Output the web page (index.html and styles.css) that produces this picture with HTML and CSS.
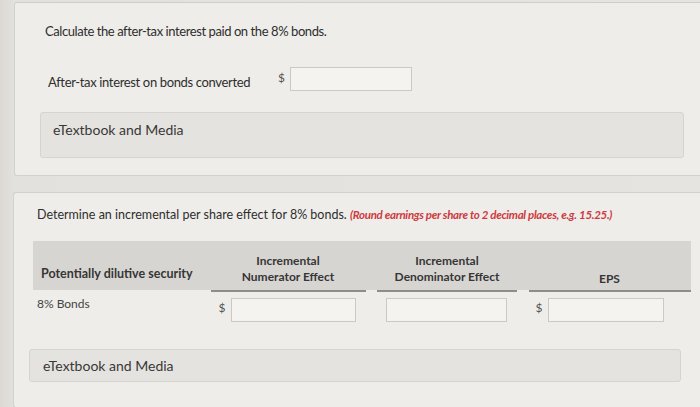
FILE: index.html
```html
<!DOCTYPE html>
<html>
<head>
<meta charset="utf-8">
<link rel="stylesheet" href="styles.css">
</head>
<body>
<div class="page">
  <section class="card card-one">
    <p class="title">Calculate the after-tax interest paid on the 8% bonds.</p>
    <div class="field-row">
      <span class="field-label">After-tax interest on bonds converted</span>
      <span class="dollar">$</span>
      <span class="input input-wide"></span>
    </div>
    <div class="media">eTextbook and Media</div>
  </section>

  <section class="card card-two">
    <p class="title title-two">Determine an incremental per share effect for 8% bonds. <em class="note">(Round earnings per share to 2 decimal places, e.g. 15.25.)</em></p>
    <div class="table">
      <div class="thead">
        <div class="th th-first">Potentially dilutive security</div>
        <div class="th th-col">Incremental<br>Numerator Effect</div>
        <div class="th th-col">Incremental<br>Denominator Effect</div>
        <div class="th th-col th-eps">EPS</div>
      </div>
      <div class="trow">
        <div class="td td-first">8% Bonds</div>
        <div class="td td-num"><span class="dollar">$</span><span class="input input-num"></span></div>
        <div class="td td-den"><span class="input input-den"></span></div>
        <div class="td td-eps"><span class="dollar">$</span><span class="input input-eps"></span></div>
      </div>
    </div>
    <div class="media media-two">eTextbook and Media</div>
  </section>
</div>
</body>
</html>
```

FILE: styles.css
```css
* { box-sizing: border-box; }
html, body {
  margin: 0;
  padding: 0;
  height: 100%;
  overflow: hidden;
}
body {
  background: linear-gradient(90deg, #dcd9d5 0px, #e3e1dd 14px, #e6e4e0 100%);
  font-family: Lato, "Open Sans", "Liberation Sans", sans-serif;
  color: #2e2e2e;
}
.page {
  padding: 2px 0 0 14px;
  display: flex;
  flex-direction: column;
  gap: 16px;
}
.card {
  background: #efede9;
  border: 1px solid #d3d1cd;
  border-right: none;
  border-radius: 3px 0 0 3px;
}
.card-one {
  padding: 20px 0 17px 25px;
  border-top-color: #cfcdc9;
}
.title {
  margin: 0;
  padding-left: 5px;
  font-size: 13px;
  letter-spacing: -0.42px;
  line-height: 16px;
  color: #2e2e2e;
}
.field-row {
  margin-top: 27px;
  display: flex;
  align-items: center;
  height: 26px;
  padding-left: 8px;
}
.field-label {
  width: 230px;
  font-size: 13px;
  letter-spacing: -0.35px;
  padding-top: 6px;
  color: #2e2e2e;
}
.dollar {
  font-size: 12px;
  color: #555;
  width: 12px;
  margin-top: -4px;
}
.input {
  display: block;
  height: 24px;
  background: #f4f3ef;
  border: 1px solid #cbc9c5;
}
.input-wide { width: 122px; }
.media {
  margin-top: 20px;
  width: 644px;
  height: 46px;
  background: #e5e3df;
  border: 1px solid #d6d4d0;
  border-radius: 3px;
  font-size: 14px;
  color: #383838;
  padding: 8px 0 0 12px;
}
.card-two {
  margin-left: -1px;
  padding: 14px 0 25px 19px;
  flex: 1;
}
.title-two {
  padding-left: 4px;
  font-size: 12.5px;
  letter-spacing: 0;
}
.note {
  color: #cc3a40;
  font-weight: 700;
  font-style: italic;
  font-size: 11.5px;
  letter-spacing: -0.3px;
}
.table {
  margin-top: 18px;
  width: 658px;
}
.thead {
  display: grid;
  grid-template-columns: 166px 155px 140px 162px;
  column-gap: 11.5px;
  background: #d7d5d1;
  height: 49px;
  align-items: end;
}
.th {
  font-weight: 700;
  font-size: 12px;
  line-height: 16px;
  color: #363636;
}
.th-first {
  padding: 0 0 8px 8px;
  font-size: 12.5px;
}
.th-col {
  text-align: center;
  padding-bottom: 5px;
  border-bottom: 2px solid #8f8d8a;
  margin-bottom: -2px;
}
.th-eps {
  padding-bottom: 3px;
}
.trow {
  display: grid;
  grid-template-columns: 166px 155px 140px 162px;
  column-gap: 11.5px;
  margin-top: 7px;
  height: 25px;
  align-items: center;
}
.td {
  display: flex;
  align-items: center;
}
.td-first {
  padding-left: 4px;
  font-size: 12px;
  color: #444;
  margin-top: -12px;
}
.td-num { padding-left: 8px; }
.input-num { width: 125px; }
.td-den { padding-left: 9px; }
.input-den { width: 121px; }
.td-eps { padding-left: 7px; }
.input-eps { width: 116px; }
.media-two {
  margin-top: 27px;
  margin-left: -4px;
  width: 652px;
  height: 33px;
  padding: 7px 0 0 13px;
}
```
